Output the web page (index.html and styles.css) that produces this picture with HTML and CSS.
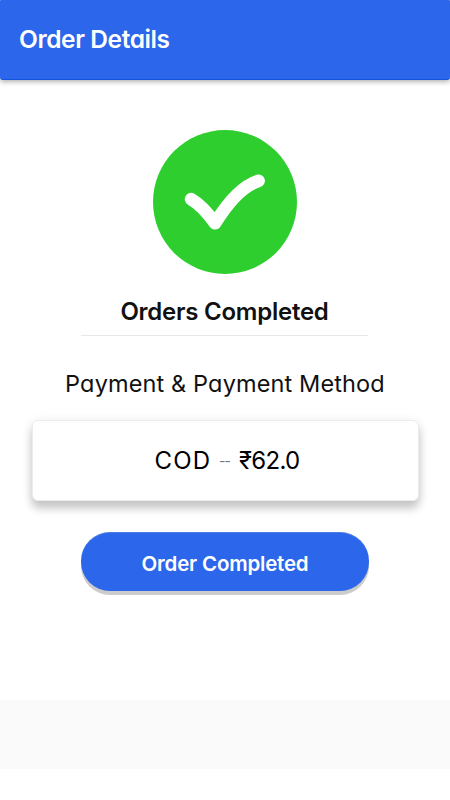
FILE: index.html
```html
<!DOCTYPE html>
<html lang="en">
<head>
<meta charset="utf-8">
<meta name="viewport" content="width=device-width, initial-scale=1">
<title>Order Details</title>
<link rel="stylesheet" href="styles.css">
</head>
<body>
<header class="app-bar"><h1 class="app-title">Order Details</h1></header>
<main class="content">
  <svg class="check" viewBox="0 0 144 144" aria-hidden="true">
    <circle cx="72" cy="72" r="72" fill="#2fce2f"/>
    <path d="M38.2 69.2Q50 76 62 93.2Q84 57.5 105.5 50.8" fill="none" stroke="#fff" stroke-width="12.8" stroke-linecap="round" stroke-linejoin="round"/>
  </svg>
  <h2 class="status">Orders Completed</h2>
  <p class="method-title">Payment &amp; Payment Method</p>
  <section class="card">
    <span class="method">COD</span><span class="dash">--</span><span class="amount">₹62.0</span>
  </section>
  <button class="button" type="button">Order Completed</button>
</main>
<footer class="footer"></footer>
</body>
</html>
```
FILE: styles.css
```css
* { box-sizing: border-box; }
body {
  margin: 0;
  height: 800px;
  overflow: hidden;
  background: #fff;
  color: #111;
  font-family: Inter, "Noto Sans", sans-serif;
  font-feature-settings: "cv11" 1;
}
h1, h2, p { margin: 0; }
.app-bar {
  height: 80px;
  padding: 22px 19px 0;
  background: #2b66eb;
  border-bottom: 1px solid #1254db;
  border-radius: 1px 1px 3px 3px;
  box-shadow: 0 2px 5px rgba(0, 0, 0, .3);
}
.app-title {
  color: #fff;
  font-size: 24.5px;
  line-height: 34px;
  font-weight: 600;
  letter-spacing: -.4px;
  white-space: nowrap;
}
.content {
  height: 620px;
  padding-top: 50px;
  display: flex;
  flex-direction: column;
  align-items: center;
}
.check { width: 144px; height: 144px; flex: none; }
.status {
  width: 287px;
  height: 62px;
  margin-right: 1px;
  padding-top: 21px;
  border-bottom: 1px solid #e8e8e8;
  text-align: center;
  font-size: 24px;
  line-height: 34px;
  font-weight: 600;
  letter-spacing: -.25px;
  white-space: nowrap;
}
.method-title {
  margin-top: 31px;
  font-size: 23.5px;
  line-height: 34px;
  letter-spacing: .13px;
  white-space: nowrap;
}
.card {
  width: 387px;
  height: 81px;
  margin: 19px 0 0;
  padding-left: 4px;
  display: flex;
  align-items: center;
  justify-content: center;
  flex: none;
  border: 1px solid #ececec;
  border-radius: 6px;
  background: #fff;
  box-shadow: 0 8px 8px rgba(0, 0, 0, .16), 0 3px 12px rgba(0, 0, 0, .12);
  font-size: 24px;
  line-height: 34px;
  color: #000;
}
.method { letter-spacing: 1.1px; }
.amount { letter-spacing: -.7px; }
.dash { margin: 0 9px 0 8px; font-size: 14px; color: #777; letter-spacing: -1px; }
.button {
  width: 288px;
  height: 59px;
  margin: 31px 0 0;
  padding: 4px 0 0;
  border: 0;
  border-top: 1px solid #4f7cdf;
  border-radius: 29px;
  background: #2b66eb;
  box-shadow: 0 4px 0 #ccc;
  color: #fff;
  font: 600 20.5px/30px Inter, "Noto Sans", sans-serif;
  letter-spacing: -.2px;
}
.footer { height: 69px; background: #fafafa; }
```
